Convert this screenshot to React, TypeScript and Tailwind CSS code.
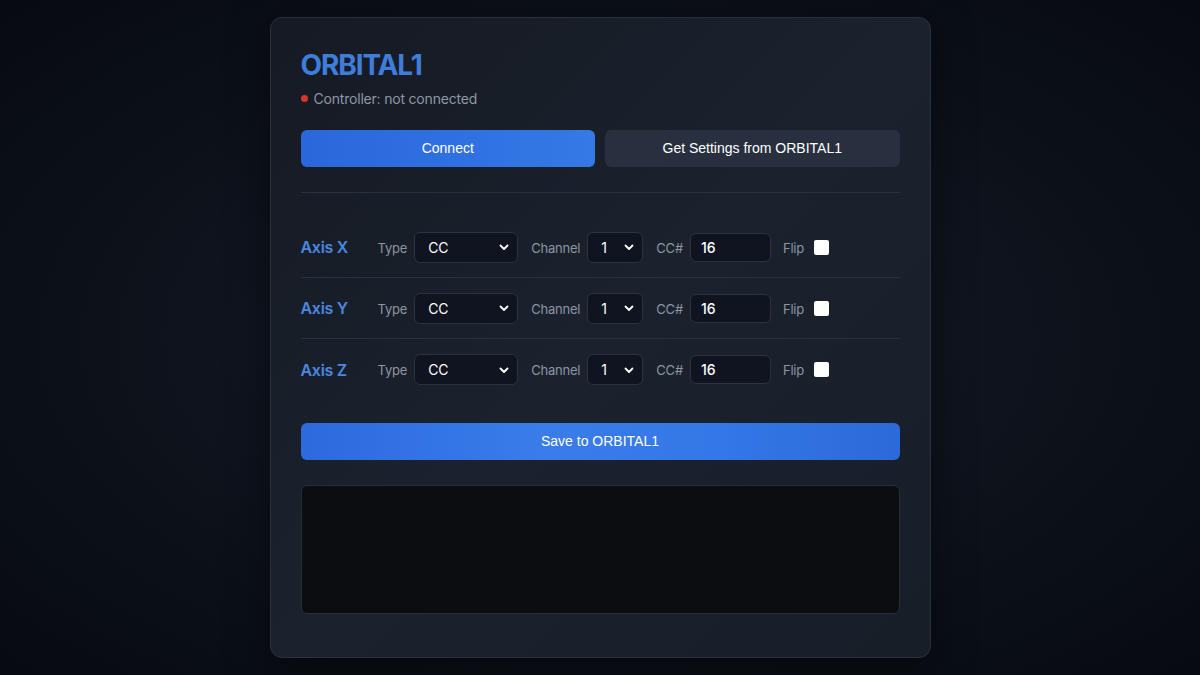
import React from "react";

function Chevron() {
  return (
    <svg width="10" height="10" viewBox="0 0 10 10" className="pointer-events-none absolute right-[8px] top-1/2 -translate-y-1/2">
      <path d="M1.5 3.5 L5 7 L8.5 3.5" fill="none" stroke="#ffffff" strokeWidth="1.8" strokeLinecap="round" strokeLinejoin="round" />
    </svg>
  );
}

function Row({ axis, last }: { axis: string; last?: boolean }) {
  return (
    <div className={`flex items-center h-[61px] ${last ? "" : "border-b border-[#2a313e]"}`}>
      <div className="w-[77px] text-[16px] font-semibold text-[#4a88e0] tracking-[-0.3px]">Axis {axis}</div>
      <div className="flex items-center gap-[7px]">
        <span className="text-[13px] leading-[16px] pt-[1px] text-[#8b95a5] tracking-[-0.2px]">Type</span>
        <div className="relative w-[104px] h-[31px] rounded-[6px] border border-[#2b3342] bg-[#0f1420] flex items-center pl-[13px] text-[14px] text-white">
          CC
          <Chevron />
        </div>
      </div>
      <div className="ml-[13px] flex items-center gap-[7px]">
        <span className="text-[13px] leading-[16px] pt-[1px] text-[#8b95a5] tracking-[-0.2px]">Channel</span>
        <div className="relative w-[56px] h-[31px] rounded-[6px] border border-[#2b3342] bg-[#0f1420] flex items-center pl-[13px] text-[14px] text-white">
          1
          <Chevron />
        </div>
      </div>
      <div className="ml-[13px] flex items-center gap-[7px]">
        <span className="text-[13px] leading-[16px] pt-[1px] text-[#8b95a5] tracking-[-0.2px]">CC#</span>
        <div className="w-[81px] h-[29px] rounded-[6px] border border-[#2b3342] bg-[#0f1420] flex items-center pl-[10px] text-[14px] font-medium text-white">
          16
        </div>
      </div>
      <div className="ml-[12px] flex items-center gap-[10px]">
        <span className="text-[13px] leading-[16px] pt-[1px] text-[#8b95a5] tracking-[-0.2px]">Flip</span>
        <div className="w-[15px] h-[15px] rounded-[2px] bg-white" />
      </div>
    </div>
  );
}

export default function App() {
  return (
    <div
      className="w-[1200px] h-[675px] flex justify-center pt-[17px] bg-[radial-gradient(ellipse_at_center,#151c28_0%,#0d121b_55%,#070a10_100%)]"
      style={{ fontFamily: "Inter, 'Noto Sans', sans-serif" }}
    >
      <div className="w-[661px] h-[641px] rounded-[12px] border border-[#2a313d] bg-[linear-gradient(135deg,#151a23_0%,#1b222d_50%,#181e28_100%)] px-[30px] pt-[30px] shadow-[0_10px_40px_rgba(0,0,0,0.5)]">
        <h1 className="text-[28px] leading-[34px] font-bold text-[#3e7ddb] tracking-[-1.1px]">ORBITAL1</h1>
        <div className="mt-[6px] flex items-center gap-[6px] h-5 text-[14px] text-[#8e97a6] tracking-[-0.2px]">
          <span className="w-[7px] h-[7px] rounded-full bg-[#d9352b]" />
          <span>Controller: not connected</span>
        </div>
        <div className="mt-[22px] flex gap-[10px]" style={{ fontFamily: "'Liberation Sans', Arial, sans-serif" }}>
          <button className="flex-1 h-[37px] rounded-[6px] text-[14px] text-white bg-[linear-gradient(90deg,#2a67db,#3479e6)]">
            Connect
          </button>
          <button className="flex-1 h-[37px] rounded-[6px] text-[14px] text-white bg-[#283040]">
            Get Settings from ORBITAL1
          </button>
        </div>
        <div className="mt-[25px] border-t border-[#2a313e]" />
        <div className="mt-[24px]">
          <Row axis="X" />
          <Row axis="Y" />
          <Row axis="Z" last />
        </div>
        <button
          className="mt-[23px] w-full h-[37px] rounded-[6px] text-[14px] text-white bg-[linear-gradient(90deg,#2c6ade,#3a7cea_40%,#3477e6_70%,#2c69d9)]"
          style={{ fontFamily: "'Liberation Sans', Arial, sans-serif" }}
        >
          Save to ORBITAL1
        </button>
        <div className="mt-[25px] h-[129px] rounded-[6px] border border-[#272e3a] bg-[#0b0d11]" />
      </div>
    </div>
  );
}
